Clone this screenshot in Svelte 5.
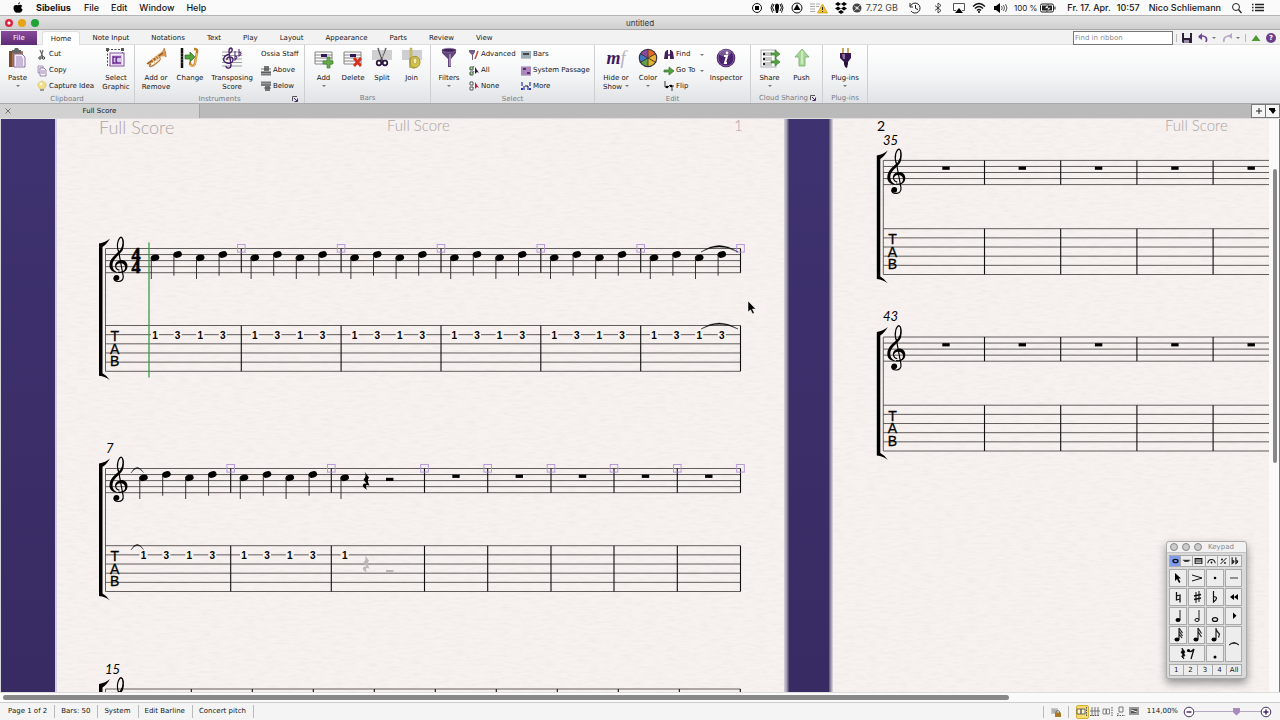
<script>
  const big = {
    paste: '<rect x="1" y="3" width="14" height="16" rx="1" fill="#a8754f"/><rect x="1" y="3" width="3" height="16" fill="#7a4d33"/><path d="M4 2h2l1-2h3l1 2h2v3H4z" fill="#666"/><path d="M6 6h8l3 3v10H6z" fill="#f3ecfa" stroke="#75558e" stroke-width=".8"/><path d="M8 9h6M8 11h7M8 13h7M8 15h7M8 17h7" stroke="#9477ae" stroke-width=".9"/>',
    select: '<rect x="1.5" y="1.5" width="15" height="16" fill="none" stroke="#444" stroke-dasharray="2 1.5"/><path d="M0 0h3v3H0zM15 0h3v3h-3z" fill="#555"/><rect x="4" y="5" width="14" height="13" fill="#f5edfa" stroke="#7d519b"/><path d="M6 8h10M6 10h10M6 14h10M6 16h10M6 12h10" stroke="#b58ccb" stroke-width=".8"/><path d="M7 8v8M7 9h8M7 15h8M11 9q-2 3 0 6" fill="none" stroke="#6b2c92" stroke-width="1.400"/>',
    trumpet: '<path d="M1 15L14 5c2-1 3-3 4-5l2 9c-2-1-4-1-6 0L3 17z" fill="#d89a54"/><path d="M1 16L17 5" stroke="#8a5326" stroke-width="1.100"/><path d="M5 16c-3 2-1 4 3 1l5-4c2-2 1-4-1-3l-6 4" fill="none" stroke="#b97836" stroke-width="1.500"/><path d="M6 10l3 6M9 8l3 6M11 7l3 5" stroke="#efc78f" stroke-width="1.2"/><path d="M18 0q2 4 2 9" stroke="#b87533" fill="none"/>',
    change: '<path d="M2 0v20" stroke="#111" stroke-width="2.5"/><path d="M2 5v12" stroke="#999" stroke-width=".8" stroke-dasharray="1 2"/><path d="M5 7h5V4l5 5-5 5v-3H5z" fill="#50a33d" stroke="#306c22" stroke-width=".7"/><path d="M14 1q4 0 3 3l-2 11c-1 4-5 4-5-1" fill="none" stroke="#c37d25" stroke-width="2.4"/><path d="M17 5l-2 11q-2 4-5 1" fill="none" stroke="#eec160" stroke-width="1.2"/>',
    transpose: '<path d="M0 4h20M0 7.5h20M0 11h20M0 14.500h20M0 18h20" stroke="#888" stroke-width=".8"/><path d="M5 15c-6-2-3-7 0-8 6-3 6-6 4-7-3 0-2 6-1 10l1 7c0 4-5 4-5 1M5 12c-1-4 6-4 6 0 0 3-4 4-6 3" fill="none" stroke="#4b226b" stroke-width="1.4"/><path d="M13 3v9q4-4 0-4M17 1v7q4-3 0-4" fill="none" stroke="#563379" stroke-width="1.1"/>',
    add: '<path d="M1 4h17v13H1z" fill="#fff"/><path d="M1 4h17M1 7h17M1 10h17M1 13h17M1 16h17M1 4v12M18 4v12" stroke="#777" stroke-width=".9"/><path d="M7 6h6v3H7z" fill="#35175b"/><path d="M13 9h3v4h3v3h-3v4h-3v-4H9v-3h4z" fill="#65ad4b" stroke="#417d31" stroke-width=".7"/>',
    delete: '<path d="M1 4h17v13H1z" fill="#fff"/><path d="M1 4h17M1 7h17M1 10h17M1 13h17M1 16h17M1 4v12M18 4v12" stroke="#777" stroke-width=".9"/><path d="M7 6h6v3H7z" fill="#35175b"/><path d="M11 10l7 8M18 10l-7 8" stroke="#d5301c" stroke-width="2.7"/>',
    split: '<path d="M0 2h20v10H0z" fill="#cfcfd1"/><path d="M6 0l5 14M14 0L8 14" stroke="#555" stroke-width="1.6"/><path d="M7 0l3 9M13 0l-3 9" stroke="#ddd" stroke-width=".7"/><circle cx="7" cy="15" r="2.300" fill="#fff" stroke="#28133e" stroke-width="1.7"/><circle cx="13" cy="15" r="2.300" fill="#fff" stroke="#28133e" stroke-width="1.7"/>',
    join: '<path d="M0 2h20v10H0z" fill="#cfcfd1"/><path d="M8 0h2v10H8z" fill="#d5c767" stroke="#a89b45" stroke-width=".5"/><ellipse cx="13" cy="14" rx="5" ry="5.700" fill="#d4c44c" stroke="#9f9033"/><ellipse cx="13" cy="13" rx="2" ry="3" fill="#f4efb1" stroke="#9f9033" stroke-width=".7"/><path d="M8 10v9l5 1" stroke="#aa9a36" stroke-width="1.500" fill="none"/>',
    filters: '<path d="M3 1h14v4l-5 6v8H9v-8L3 5z" fill="#62447a"/><path d="M10 6h2v12h-2z" fill="#9a86ab"/><ellipse cx="10" cy="2.300" rx="7" ry="2" fill="#40245b" stroke="#8d73a1" stroke-width=".7"/>',
    share: '<rect x="1" y="2" width="15" height="17" fill="#fff" stroke="#888" stroke-width=".7"/><path d="M3 5h9M3 7h9M3 10h9M3 12h9M3 15h9M3 17h9" stroke="#777" stroke-width=".8"/><path d="M4 5v2M4 10v2M4 15v2" stroke="#222" stroke-width="2"/><path d="M11 5h4V2l5 4-5 4V7h-4zM11 13h4v-3l5 4-5 4v-3h-4z" fill="#54a53f" stroke="#32722b" stroke-width=".6"/>',
    push: '<path d="M10 1l7 8h-4v9H7V9H3z" fill="#a9d79a" stroke="#78a96d" stroke-width=".8"/><path d="M10 3v13" stroke="#c9ecbc" stroke-width="2"/>',
    inspector: '<circle cx="10" cy="10" r="9.300" fill="#4a226e"/><circle cx="10" cy="10" r="8" fill="none" stroke="#8360a0"/><ellipse cx="9" cy="5" rx="6" ry="3.500" fill="#a58bb8" opacity=".5"/><path d="M8 8h3l-2 7h2" fill="none" stroke="#fff" stroke-width="2"/><circle cx="11" cy="5" r="1.400" fill="#fff"/>',
    color: '<circle cx="10" cy="10" r="9.300" fill="#3a3048"/><path d="M10 10V2a8 8 0 0 1 7 4z" fill="#e46a28"/><path d="M10 10l7-4a8 8 0 0 1 0 8z" fill="#e7b13a"/><path d="M10 10l7 4a8 8 0 0 1-7 4z" fill="#e0b52c"/><path d="M10 10v8a8 8 0 0 1-7-4z" fill="#5f9f46"/><path d="M10 10l-7 4a8 8 0 0 1 0-8z" fill="#3f78bf"/><path d="M10 10L3 6a8 8 0 0 1 7-4z" fill="#8a4aa0"/><path d="M10 1v18M2 5.500l16 9M2 14.500l16-9" stroke="#333" stroke-width=".8"/>',
    plugins: '<path d="M7 0h2v6H7zM12 0h2v6h-2z" fill="#d4a35b"/><path d="M5 5h11v5l-3 4H9L5 10z" fill="#35164f"/><path d="M7 6h3v5H8z" fill="#8b70a0"/><path d="M9 14h4v2l-1 4-2-1-1-3z" fill="#271137"/>'
  };

  const small = {
    cut: '<path d="M3 0l3 7M6 0L4 7" stroke="#666" stroke-width="1.200"/><circle cx="3" cy="8" r="1.200" fill="none" stroke="#333"/><circle cx="6.500" cy="8" r="1.200" fill="none" stroke="#333"/>',
    copy: '<path d="M1 0h5v7H1z" fill="#e8def2" stroke="#8c7aa3" stroke-width=".7"/><path d="M3 2h4l2 2v6H3z" fill="#f7f2fb" stroke="#75628b" stroke-width=".7"/><path d="M4 5h4M4 7h4" stroke="#9f85b7"/>',
    idea: '<path d="M3 8Q0 5 1 2.500q4-5 8 0Q10 5 7 8z" fill="#f5dc83" stroke="#c9b66c" stroke-width=".5"/><circle cx="4" cy="3" r="1.400" fill="#fffce4"/><path d="M3 8h4v2H3z" fill="#999"/>',
    above: '<path d="M3 0h5v5H3z" fill="#777"/><path d="M0 5h10v4H0z" fill="#999"/><path d="M0 3h10M0 6.500h10M0 9h10" stroke="#444" stroke-width=".7"/>',
    below: '<path d="M0 1h10v4H0z" fill="#999"/><path d="M4 5h5v5H4z" fill="#777"/><path d="M0 1h10M0 4h10M3 7h7" stroke="#444" stroke-width=".7"/>',
    advanced: '<path d="M0 0h6v2L4 5v5H3V5L0 2z" fill="#745d83"/><path d="M9 1L6 9" stroke="#c4503a" stroke-width="1.600"/>',
    all: '<path d="M1 1h3v3H1zM1 6h3v3H1z" fill="#fff" stroke="#555"/><path d="M1 2l1 2 3-4M1 7l1 2 3-4" stroke="#3b9234" fill="none"/><path d="M6 1v7l2-2 2 1z" fill="#321149"/>',
    none: '<path d="M1 1h3v3H1zM1 6h3v3H1z" fill="#fff" stroke="#555"/><path d="M6 1v7l2-2 2 1z" fill="#b6213a"/>',
    bars: '<path d="M0 1h10v7H0z" fill="#b5d3e6"/><path d="M0 2h10M0 4h10M0 6h10M0 8h10" stroke="#777" stroke-width=".8"/><path d="M2 3h6v2H2z" fill="#444"/>',
    passage: '<path d="M0 1h10v8H0z" fill="#c8a2d7"/><path d="M0 1h10M0 3h10M0 5h10M0 7h10M0 9h10" stroke="#805a94" stroke-width=".8"/><path d="M2 3h3M6 7h3" stroke="#35184d" stroke-width="1.500"/>',
    more: '<path d="M1 1v4M9 1v4M3 5v4M7 5v4" stroke="#2631a7" stroke-width="1.200"/><path d="M4 5h3" stroke="#111"/><path d="M0 8h2M8 8h2" stroke="#2336bc" stroke-width="2"/>',
    find: '<path d="M1 2l2-2h1v4h2V0h1l2 2 1 7H6V6H4v3H0z" fill="#43215e"/><path d="M4 4h2v2H4z" fill="#765193"/>',
    goto: '<path d="M0 4h5V1l5 4-5 4V6H0z" fill="#54a440" stroke="#34702b" stroke-width=".7"/>',
    flip: '<path d="M1 0v6M1 6h2M8 10V5M8 5h2M4 6l2-2" stroke="#333"/><circle cx="3" cy="6" r="1.300"/><circle cx="7" cy="5" r="1.300"/>'
  };

  const tabs = ['Note Input', 'Notations', 'Text', 'Play', 'Layout', 'Appearance', 'Parts', 'Review', 'View'];

  const groups = [
    { name: 'Clipboard', width: 135, items: [
      { icon: 'paste', lines: ['Paste'], caret: true, width: 35 },
      { width: 60, rows: [['cut', 'Cut'], ['copy', 'Copy'], ['idea', 'Capture Idea']] },
      { icon: 'select', lines: ['Select', 'Graphic'], width: 36 }] },
    { name: 'Instruments', width: 170, launcher: true, items: [
      { icon: 'trumpet', lines: ['Add or', 'Remove'], width: 38 },
      { icon: 'change', lines: ['Change'], width: 30 },
      { icon: 'transpose', lines: ['Transposing', 'Score'], width: 54 },
      { width: 40, rows: [['', 'Ossia Staff'], ['above', 'Above'], ['below', 'Below']] }] },
    { name: 'Bars', width: 126, items: [
      { icon: 'add', lines: ['Add'], caret: true, width: 30 },
      { icon: 'delete', lines: ['Delete'], width: 29 },
      { icon: 'split', lines: ['Split'], width: 29 },
      { icon: 'join', lines: ['Join'], width: 30 }] },
    { name: 'Select', width: 164, items: [
      { icon: 'filters', lines: ['Filters'], caret: true, width: 36 },
      { width: 49, rows: [['advanced', 'Advanced'], ['all', 'All'], ['none', 'None']] },
      { width: 72, rows: [['bars', 'Bars'], ['passage', 'System Passage'], ['more', 'More']] }] },
    { name: 'Edit', width: 156, items: [
      { icon: 'mf', lines: ['Hide or', 'Show ▾'], width: 36 },
      { icon: 'color', lines: ['Color'], caret: true, width: 28 },
      { width: 40, rows: [['find', 'Find', 1], ['goto', 'Go To', 1], ['flip', 'Flip']] },
      { icon: 'inspector', lines: ['Inspector'], width: 42 }] },
    { name: 'Cloud Sharing', width: 72, launcher: true, compact: true, items: [
      { icon: 'share', lines: ['Share'], caret: true, width: 36 },
      { icon: 'push', lines: ['Push'], width: 28 }] },
    { name: 'Plug-ins', width: 45, items: [
      { icon: 'plugins', lines: ['Plug-ins'], caret: true, width: 42 }] }
  ];

  const trayIcons = [
    [20, 'Record', '<circle cx="6" cy="6" r="4.500" fill="none" stroke="#111"/><path d="M4 4h4v4H4z"/>'],
    [20, 'Podcast', '<path d="M3 9Q0 6 3 2M9 9q3-3 0-7M1.500 10.500q-3-5 0-9M10.500 10.500q3-5 0-9" fill="none" stroke="#111"/><path d="M4 3q2-3 4 0v3L7 11H5L4 6z"/>'],
    [20, 'Updates', '<circle cx="6" cy="6" r="5" fill="none" stroke="#111"/><path d="M6 2l3.500 6h-7z"/>'],
    [25, 'Warning', '<path d="M-3 2h5M-3 4.500h5M-3 7h5M-3 9.500h5M3 2h4M3 4.500h3" stroke="#aaa"/><path d="M9.500 2l5 9h-10z" fill="#f1c232" stroke="#c99715" stroke-width=".7"/><path d="M9.500 5v3M9.500 9v1" stroke="#222"/>'],
    [18, 'Dropbox', '<path d="M3 0l3 2-3 2-3-2zM9 0l3 2-3 2-3-2zM3 4.500l3 2-3 2-3-2zM9 4.500l3 2-3 2-3-2zM6 8l3 2-3 2-3-2z"/>'],
    [14, 'Disk', '<circle cx="6" cy="6" r="4.500" fill="#444"/><path d="M3 4l6 4M9 3L3 9" stroke="#aaa"/><circle cx="6" cy="6" r="1.500" fill="#ddd"/>']
  ];
  const trayIcons2 = [
    [23, 'Time Machine', '<path d="M1.500 4A5 5 0 1 1 2 9M1 1v4h3M6.500 3v3.500l2.500 1" fill="none" stroke="#222"/>'],
    [22, 'Bluetooth', '<path d="M3 3.500l6 5-3 2.500V1l3 2.500-6 5" fill="none" stroke="#333" stroke-width=".9"/>'],
    [20, 'AirPlay', '<path d="M3 8.500H.500v-7h11v7H9" fill="none" stroke="#555"/><path d="M6 6l4 5H2z"/>'],
    [21, 'Wi-Fi', '<path d="M0 4.500q6-6 12 0M2 6.500q4-4 8 0M4 8.500q2-2 4 0" fill="none" stroke="#111" stroke-width="1.300"/><circle cx="6" cy="10" r="1"/>'],
    [20, 'Volume', '<path d="M0 4h2l4-3v10L2 8H0z"/><path d="M7.500 4q1.500 2 0 4M9.500 3q2 3 0 6M11.500 2q3 4 0 8" fill="none" stroke="#333" stroke-width=".8"/>']
  ];

  const range = (n) => Array.from({ length: n }, (_, i) => i);

  // Each system: staff origin, tab staff top, right edge, barlines, notes and rests
  const systems = [
    { x: 105.5, y: 248.5, tab: 325.5, end: 740.5, bars: [241.3, 341.1, 441, 540.8, 640.7, 740.5], marks: true, time: true,
      notes: range(24).map((i) => ({ x: 155 + 99.8 * Math.floor(i / 4) + 22.6 * (i % 4), d: i % 2 })), rests: [] },
    { x: 105.5, y: 468.5, tab: 545.7, end: 740.5, bars: [230.7, 331.3, 424.5, 487.7, 551, 614, 677.3, 740.5], marks: true, label: '7', lx: 106, ly: 453,
      notes: [143.5, 166.4, 189.4, 212.3, 244, 267, 289.8, 312.8, 344.7].map((x, i) => ({ x, d: i % 2 })),
      rests: [456, 519.3, 582.5, 645.5, 708.8] },
    { x: 105.5, y: 689, tab: 766, end: 740.5, bars: range(10).map((i) => 191.3 + i * 61), label: '15', lx: 105, ly: 674, notes: [], rests: [] },
    { x: 883.3, y: 160.4, tab: 228.7, end: 1518, bars: range(8).map((i) => 984.5 + i * 76.2), label: '35', lx: 883, ly: 145, notes: [], rests: range(8).map((i) => 946 + i * 76.3) },
    { x: 883.3, y: 337, tab: 405.2, end: 1518, bars: range(8).map((i) => 984.5 + i * 76.2), label: '43', lx: 883, ly: 321, notes: [], rests: range(8).map((i) => 946 + i * 76.3) }
  ];

  const quarterRest = 'M-2 -9.500L2.500 -3.500Q0 -.5 3 4.500Q-1 3 -.5 5.500Q-.5 7.500 .8 9Q-5.500 5.500 -3 3Q-2 2 0 2.800L-3 -1.500Q.5 -5 -2 -9.500Z';

  const padTop = [
    ['Common notes', '<ellipse cx="6" cy="5" rx="3.300" ry="2.200" fill="none" stroke="#111" stroke-width="1.800"/>'],
    ['More notes', '<path d="M1 4h10" stroke="#111"/><path d="M3 5h6" stroke="#111" stroke-width="2"/>'],
    ['Beams', '<path d="M1.500 1v8M10.500 1v8M1.500 5h9M1.500 8h9" fill="none" stroke="#111" stroke-width="1.300"/><path d="M1.500 2h9" stroke="#111" stroke-width="2"/>'],
    ['Articulations', '<path d="M1 8q1-5 5-5t5 5" fill="none" stroke="#111" stroke-width="1.400"/><circle cx="6" cy="7" r="1.200"/>'],
    ['Jazz', '<path d="M10 1L2 9" stroke="#111" stroke-width="1.300"/><circle cx="4" cy="3" r="1.200"/><circle cx="8" cy="7.500" r="1.200"/>'],
    ['Accidentals', '<path d="M1.500 0v8.500q5-4 0-4M6.500 0v8.500q5-4 0-4" fill="none" stroke="#111" stroke-width="1.400"/>']
  ];
  const padKeys = [
    ['Pointer', '<path d="M5 3v8l2-2 2 4 1.500-1-2-3.500H11z"/>'],
    ['Accent', '<path d="M3 5l10 3-10 3" fill="none" stroke="#111"/>'],
    ['Staccato', '<circle cx="8" cy="8" r="1.300"/>'],
    ['Tenuto', '<path d="M4 8h8" stroke="#333"/>'],
    ['Natural', '<path d="M6.500 3v8l3.500-1M10 13.500V6l-3.500 1" fill="none" stroke="#111" stroke-width="1.300"/>'],
    ['Sharp', '<path d="M7 3v11M10 2v11" stroke="#111"/><path d="M5 7l7-1.500M5 10.500L12 9" stroke="#111" stroke-width="1.700"/>'],
    ['Flat', '<path d="M6.500 2v11q6-5 0-5.500" fill="none" stroke="#111" stroke-width="1.200"/>'],
    ['Rewind', '<path d="M8 5v6L4 8zM12 5v6L8 8z"/>'],
    ['Quarter note', '<path d="M10 2v10" stroke="#222"/><ellipse cx="8" cy="12" rx="2.500" ry="1.900"/>'],
    ['Half note', '<path d="M10 2v10" stroke="#222"/><ellipse cx="8" cy="12" rx="2.100" ry="1.500" fill="none" stroke="#111"/>'],
    ['Whole note', '<ellipse cx="8" cy="11.500" rx="2.600" ry="1.900" fill="none" stroke="#111" stroke-width="1.300"/>'],
    ['Play', '<path d="M7 4.500v6.500l3.500-3.200z"/>'],
    ['Thirty-second note', '<path d="M9 1v11M9 1l3.500 5M9 4l3.500 5M9 7l3 4" stroke="#222" stroke-width="1.200"/><ellipse cx="7" cy="12.500" rx="2.500" ry="1.900"/>'],
    ['Sixteenth note', '<path d="M9 1v11M9 1l3.500 5.500M9 4.500l3.500 5.500" stroke="#222" stroke-width="1.200"/><ellipse cx="7" cy="12.500" rx="2.500" ry="1.900"/>'],
    ['Eighth note', '<path d="M9 1v11M9 2q1 3 3.500 5l-1 3.500" fill="none" stroke="#222" stroke-width="1.200"/><ellipse cx="7" cy="12.500" rx="2.500" ry="1.900"/>'],
    ['Tie', '<path d="M3 9q5-5 10 0-5-3.500-10 0z" stroke="#111" stroke-width=".7"/>', 'tall'],
    ['Rest', '<path d="M3 2l3 4q-2 1 0 4-3-1-1 3-4-3-1-4L2 6q2-1 1-4z" stroke="#111" stroke-width=".8"/><path d="M9 5q3 2 6-2l-3 10" fill="none" stroke="#111" stroke-width="1.300"/><circle cx="9.500" cy="4.500" r="1.600"/>', 'wide'],
    ['Dot', '<circle cx="8" cy="11" r="1.500"/>']
  ];

  const views = [
    '<path d="M0 3h4v5H0zM4 3h4v5H4z" fill="#fff6d0" stroke="#555" stroke-width=".9"/><path d="M9.500 1v9" stroke="#555" stroke-dasharray="1.500 1"/>',
    '<path d="M2 1v9M5 1v9M8 1v9M0 5h10" stroke="#666" stroke-width=".9"/><path d="M0 9.500h10" stroke="#555" stroke-dasharray="1.500 1"/>',
    '<path d="M0 3h3v5H0zM3.500 3h3v5h-3z" fill="none" stroke="#777" stroke-width=".9"/><path d="M9 1v9" stroke="#555" stroke-dasharray="1.500 1"/>',
    '<path d="M3 1h4v5H3z" fill="none" stroke="#777"/><path d="M1 9.500h8M2 7v2" stroke="#555" stroke-dasharray="1.500 1"/>',
    '<path d="M0 1h10v8H0z" fill="#999"/><path d="M2 3h6v4H2z" fill="#555"/><path d="M2 4l6 2" stroke="#eee"/>'
  ];
</script>

{#snippet glyph(size, body, cls = '')}
  <svg class={cls} width={size} height={size} viewBox="0 0 {size} {size}" aria-hidden="true">{@html body}</svg>
{/snippet}

{#snippet clef(x, y)}
  <g transform="translate({x} {y}) scale(0.3333) translate(-166 -86)">
    <path d="M206 98C196 74 206 54 213 52C222 56 221 78 212 90M205 93L219 168C221 180 212 186 204 185C195 185 191 180 191 174M204 157C224 160 229 148 229 139M197 139C197 146 202 150 208 151" fill="none" stroke="#000" stroke-width="3.500" />
    <circle cx="199" cy="174" r="8.500" />
    <path d="M214 86C200 103 178 113 178 137C178 152 192 160 206 159C192 154 187 146 187 136C187 118 206 108 217 92C223 80 222 62 214 50C219 64 219 78 214 86Z" />
    <path d="M232 139C232 127 222 119 211 121C198 123 192 134 196 143C199 134 203 130 211 130C220 130 225 135 225 143C225 150 220 156 213 158C225 157 232 149 232 139Z" />
  </g>
{/snippet}

<div class="app">
  <nav class="menubar" aria-label="System menu">
    <svg class="apple" width="10" height="11" viewBox="0 0 10 11" aria-hidden="true"><path d="M7 0q0 2-2 2.500Q5 .5 7 0zM5 3.200Q8 2 9.300 4q-2.300 1.500.4 3.700Q8 12 5 10.400 2.500 12 .8 8 -.6 1.800 5 3.200z" /></svg>
    <a href="#app" class="appname">Sibelius</a>
    {#each ['File', 'Edit', 'Window', 'Help'] as m}<a href="#{m}">{m}</a>{/each}
    <div class="tray">
      {#each trayIcons as [w, label, body]}
        <span class="cell" style:width="{w}px" title={label}>{@render glyph(12, body)}</span>
      {/each}
      <span class="mem">7.72 GB</span>
      {#each trayIcons2 as [w, label, body]}
        <span class="cell" style:width="{w}px" title={label}>{@render glyph(12, body)}</span>
      {/each}
      <span class="pct">100 %</span>
      <svg class="battery" width="16" height="10" viewBox="0 0 16 10" aria-hidden="true"><rect x=".5" y="1" width="13" height="8" rx="1.500" fill="#fff" stroke="#222" /><path d="M2 2.500h10v5H2z" fill="#222" /><path d="M8 1L4.500 5.500H8L6.500 9 11 4.500H8z" fill="#fff" stroke="#222" stroke-width=".6" /><path d="M15 3.500v3" stroke="#222" /></svg>
      <span class="date">Fr. 17. Apr.</span>
      <span class="time">10:57</span>
      <span class="user">Nico Schliemann</span>
      {@render glyph(12, '<circle cx="5" cy="5" r="3.500" fill="none" stroke="#222"/><path d="M7.500 7.500l3 3.500" stroke="#222" stroke-width="1.300"/>', 'search')}
      {@render glyph(12, '<path d="M3 2.500h9M3 5.500h9M3 8.500h9" stroke="#222" stroke-width="1.300"/><path d="M0 2.500h1.500M0 5.500h1.500M0 8.500h1.500" stroke="#222" stroke-width="1.300"/>', 'list')}
    </div>
  </nav>

  <header class="titlebar">
    <div class="lights"><button class="red" aria-label="Close"></button><button class="amber" aria-label="Minimise"></button><button class="green" aria-label="Zoom"></button></div>
    <span>untitled</span>
  </header>

  <div class="tabs">
    <button class="file">File</button>
    <button class="home">Home</button>
    {#each tabs as t}<button>{t}</button>{/each}
    <div class="quick">
      <input type="text" placeholder="Find in ribbon" aria-label="Find in ribbon" />
      <i class="bar"></i>
      <button aria-label="Save">{@render glyph(10, '<path d="M0 0h10v10H1L0 9z" fill="#2d2038"/><path d="M2 0h6v5H2z" fill="#eee"/><path d="M2 7h5v3H2z" fill="#998cab"/>')}</button>
      <button aria-label="Undo" class="undo">{@render glyph(10, '<path d="M1 3h4q5 1 3 6" fill="none" stroke="#6f4695" stroke-width="1.700"/><path d="M0 4l4-4v7z" fill="#6f4695"/>')}<i class="caret"></i></button>
      <button aria-label="Redo" class="undo">{@render glyph(10, '<path d="M9 3H6Q1 4 2 9" fill="none" stroke="#b7a7c8" stroke-width="1.700"/><path d="M10 0v6L6 3z" fill="#b7a7c8"/>')}<i class="caret"></i></button>
      <i class="bar"></i>
      <button aria-label="Collapse ribbon">{@render glyph(10, '<path d="M5 2l4.500 6h-9z" fill="#4e9a35"/>')}</button>
      <button aria-label="Help" class="help">?</button>
    </div>
  </div>

  <div class="ribbon">
    {#each groups as g}
      <section class="group" class:compact={g.compact} style:width="{g.width}px" aria-label={g.name}>
        <div class="body">
          {#each g.items as it}
            {#if it.rows}
              <div class="stack" style:width="{it.width}px">
                {#each it.rows as [ic, label, caret]}
                  {#if ic}
                    <button class="row">{@render glyph(10, small[ic])}<span>{label}</span>{#if caret}<i class="caret"></i>{/if}</button>
                  {:else}
                    <span class="row">{label}</span>
                  {/if}
                {/each}
              </div>
            {:else}
              <button class="big" style:width="{it.width}px">
                {#if it.icon === 'mf'}
                  <span class="mf"><b>m</b><em>f</em></span>
                {:else}
                  {@render glyph(20, big[it.icon])}
                {/if}
                <span class="lines">
                  {#each it.lines as l}
                    <span>{l.replace(' ▾', '')}{#if l.includes('▾')}<i class="caret inline"></i>{/if}</span>
                  {/each}
                </span>
                {#if it.caret}<i class="caret"></i>{/if}
              </button>
            {/if}
          {/each}
        </div>
        <footer><span>{g.name}</span>{#if g.launcher}{@render glyph(6, '<path d="M.5 5V.5H5" fill="none" stroke="#555"/><path d="M2 2l3 3M5.500 2.500v3h-3" stroke="#4b226b" fill="none"/>', 'launch')}{/if}</footer>
      </section>
    {/each}
  </div>

  <div class="docs">
    <div class="doc"><button aria-label="Close tab">{@render glyph(6, '<path d="M.5 .5l5 5M5.500 .5l-5 5" stroke="#666" stroke-width=".9"/>')}</button><span>Full Score</span></div>
    <button class="sq" aria-label="New tab">{@render glyph(8, '<path d="M4 1v6M1 4h6" stroke="#222"/>')}</button>
    <button class="sq" aria-label="Tab list">{@render glyph(8, '<path d="M0 1h6v2H0z"/><path d="M1 3h6L4 7z"/>')}</button>
  </div>

  <div class="work">
    <main class="canvas">
      <svg class="score" role="img" aria-label="Full score">
        <defs>
          <filter id="grain" x="0" y="0" width="100%" height="100%">
            <feTurbulence type="fractalNoise" baseFrequency="0.09 0.42" numOctaves="3" seed="4" />
            <feColorMatrix values="0 0 0 0 0.76  0 0 0 0 0.68  0 0 0 0 0.66  0.55 0 0 0 -0.21" />
          </filter>
          <linearGradient id="edgeR"><stop offset="0" stop-color="#d5d1dc" /><stop offset=".5" stop-color="#a5a1b3" /><stop offset="1" stop-color="#4a4269" /></linearGradient>
          <linearGradient id="edgeL"><stop offset="0" stop-color="#59536e" /><stop offset=".6" stop-color="#aaa6b8" /><stop offset="1" stop-color="#e3dee3" /></linearGradient>
        </defs>
        <g transform="translate(0 -119)">
          <rect class="paper" x="56" y="100" width="730" height="1100" />
          <rect class="paper" x="831" y="100" width="730" height="1100" />
          <rect x="56" y="119" width="730" height="900" filter="url(#grain)" />
          <rect x="831" y="119" width="730" height="900" filter="url(#grain)" />
          <rect x="55" y="100" width="2" height="1100" fill="#d6d0e4" />
          <rect x="784" y="100" width="5" height="1100" fill="url(#edgeR)" />
          <rect x="829" y="100" width="4" height="1100" fill="url(#edgeL)" />

          <text class="head title" x="99" y="134">Full Score</text>
          <text class="head" x="387" y="131">Full Score</text>
          <text class="head" x="734" y="131">1</text>
          <text class="num page" x="877" y="131">2</text>
          <text class="head" x="1165" y="131">Full Score</text>

          {#each systems as s}
            {@const b = s.tab + 45.8}
            {#each range(5) as i}<line class="staff" x1={s.x} x2={s.end} y1={s.y + i * 6.05} y2={s.y + i * 6.05} />{/each}
            {#each range(6) as i}<line class="staff" x1={s.x} x2={s.end} y1={s.tab + i * 9.16} y2={s.tab + i * 9.16} />{/each}
            <line class="staff" x1={s.x} x2={s.x} y1={s.y} y2={b} />
            <path d="M{s.x - 6.5} {s.y - 5}Q{s.x} {s.y - 6} {s.x + 4.5} {s.y - 10}Q{s.x + 1} {s.y - 4} {s.x - 3} {s.y - 1.500}V{b + 2}Q{s.x + 1} {b + 4} {s.x + 4.5} {b + 9}Q{s.x} {b + 5} {s.x - 6.5} {b + 4.5}Z" />
            {@render clef(s.x, s.y)}
            {#if s.time}
              <text class="sig" x="136" y={s.y + 12}>4</text>
              <text class="sig" x="136" y={s.y + 24}>4</text>
            {/if}
            {#each ['T', 'A', 'B'] as t, i}<text class="tab" x={s.x + 9.2} y={s.tab + 15.5 + i * 12.5}>{t}</text>{/each}
            {#each s.bars as x}
              <line class="barline" x1={x} x2={x} y1={s.y} y2={s.y + 24.3} />
              <line class="barline" x1={x} x2={x} y1={s.tab} y2={b} />
              {#if s.marks}<rect class="mark" x={x - 3.8} y={s.y - 4} width="7.600" height="7.600" />{/if}
            {/each}
            {#each s.rests as x}<rect x={x - 3.7} y={s.y + 6.2} width="7.400" height="3.200" />{/each}
            {#each s.notes as n}
              {@const cy = s.y + (n.d ? 6 : 9.3)}
              <ellipse cx={n.x} {cy} rx="4.400" ry="3.100" transform="rotate(-18 {n.x} {cy})" />
              <line class="stem" x1={n.x - 3.7} x2={n.x - 3.7} y1={cy} y2={cy + 21.2} />
              <rect class="paper" x={n.x - 4} y={s.tab + 5} width="8" height="9" />
              <text class="fret" x={n.x} y={s.tab + 13}>{n.d ? 3 : 1}</text>
            {/each}
            {#if s.label}<text class="num" x={s.lx} y={s.ly}>{s.label}</text>{/if}
          {/each}

          <path d="M701 252Q719 239 738 252Q719 242 701 252Z" class="tie" />
          <path d="M701 329Q719 317 738 329Q719 319.500 701 329Z" class="tie" />
          <path d="M131 473Q137 462.500 143.500 472.500Q137 464 131 473Z" class="tie" />
          <path d="M131 550Q137 539.500 143.500 549.500Q137 541 131 550Z" class="tie" />
          <path d={quarterRest} transform="translate(366.500 481)" />
          <rect x="386" y="477.800" width="7.400" height="3.200" />
          <path d={quarterRest} transform="translate(366.500 564)" fill="#bdb9b8" />
          <rect x="386" y="570" width="7.400" height="2.500" fill="#bdb9b8" />
          <line x1="149" x2="149" y1="242.500" y2="377.500" stroke="#3d9b45" stroke-width="1.300" />
          <path d="M748 301v11l2.500-2.200 2 4 1.800-.9-1.900-3.900h3.300z" stroke="#fff" stroke-width=".5" />
        </g>
      </svg>

      <aside class="keypad" aria-label="Keypad">
        <header><i></i><i></i><i></i><span>Keypad</span></header>
        <div class="modes">
          {#each padTop as [label, body], i}<button class:active={i === 0} aria-label={label}><svg width="9" height="8" viewBox="0 0 12 10" aria-hidden="true">{@html body}</svg></button>{/each}
        </div>
        <div class="keys">
          {#each padKeys as [label, body, cls]}<button class={cls} aria-label={label}>{@render glyph(16, body)}</button>{/each}
        </div>
        <div class="voices">
          {#each ['1', '2', '3', '4', 'All'] as v}<button>{v}</button>{/each}
        </div>
      </aside>
    </main>
    <div class="vscroll"><i></i></div>
  </div>
  <div class="hscroll"><i></i></div>

  <footer class="status">
    {#each ['Page 1 of 2', 'Bars: 50', 'System', 'Edit Barline', 'Concert pitch'] as s}<span class="item">{s}</span>{/each}
    <div class="right">
      <span class="lock">{@render glyph(10, '<path d="M0 1h7v6H0z" fill="#ccc"/><path d="M1 3h5M1 5h4" stroke="#999"/><path d="M5 6V4.500q2-2 3.500 0V6" fill="none" stroke="#666"/><path d="M4 5.500h6V10H4z" fill="#a97825"/>')}</span>
      {#each views as v, i}<button class="view" class:on={i === 0} aria-label="View {i + 1}">{@render glyph(11, v)}</button>{/each}
      <output>114,00%</output>
      <button class="zoom" aria-label="Zoom out">{@render glyph(12, '<circle cx="6" cy="6" r="4.800" fill="#fff" stroke="#4b2c69"/><path d="M3.500 6h5" stroke="#4b2c69" stroke-width="1.500"/>')}</button>
      <input type="range" min="0" max="100" value="65" aria-label="Zoom level" />
      <button class="zoom" aria-label="Zoom in">{@render glyph(12, '<circle cx="6" cy="6" r="4.800" fill="#fff" stroke="#4b2c69"/><path d="M3.500 6h5M6 3.500v5" stroke="#4b2c69" stroke-width="1.500"/>')}</button>
    </div>
  </footer>
</div>

<style>
  :global(body) { margin: 0; }
  .app { display: flex; flex-direction: column; height: 100vh; overflow: hidden; background: #f4f4f4; color: #161616; font: 7px/9px 'DejaVu Sans', sans-serif; }
  button { border: 0; padding: 0; margin: 0; background: none; color: inherit; font: inherit; }
  svg { display: block; flex: none; overflow: visible; }
  a { color: inherit; text-decoration: none; }

  .menubar { display: flex; align-items: center; height: 15px; flex: none; padding-left: 13px; background: #fafafa; font: 500 9px/14px Inter, sans-serif; white-space: nowrap; }
  .menubar a { margin-right: 12px; }
  .apple { margin-right: 13px; }
  .menubar .appname { font-weight: 700; margin-right: 13px; }
  .tray { display: flex; align-items: center; margin-left: auto; }
  .cell { display: flex; justify-content: center; }
  .mem { color: #444; font-weight: 400; margin: 0 6px 0 2px; }
  .pct { font-size: 8px; font-weight: 400; margin: 0 3px 0 4px; }
  .date { margin-left: 11px; }
  .time { margin: 0 9px 0 6px; }
  .tray :global(.search) { margin: 0 9px 0 10px; }
  .tray :global(.list) { margin-right: 16px; }

  .titlebar { display: grid; grid-template-columns: 1fr auto 1fr; align-items: center; height: 13px; flex: none; border-top: 1px solid #b5b5b5; border-bottom: 1px solid #aaa; background: linear-gradient(#e2e2e2, #cfcfcf); font: 8px/12px Inter, sans-serif; color: #333; }
  .lights { display: flex; gap: 5px; padding-left: 5px; }
  .lights button { width: 8px; height: 8px; border-radius: 50%; }
  .red { background: radial-gradient(circle, #fff 1px, #dc2342 2px); }
  .amber { background: #e8a317; }
  .green { background: #1fa336; }

  .tabs { display: flex; align-items: stretch; height: 15px; flex: none; background: #f2f2f2; box-shadow: inset 0 -1px #dcdcdc; }
  .tabs > button { padding: 2px 11px 0; white-space: nowrap; }
  .tabs > .file { padding: 1px 12px 0; margin: 1px 5px 0 1px; background: linear-gradient(#8a4b9b, #5c2a74); color: #fff; }
  .tabs > .home { padding: 1px 8px 0; margin: 1px 1px 0 0; background: #fff; border: 1px solid #ddd; border-bottom: 0; border-radius: 3px 3px 0 0; }
  .quick { display: flex; align-items: center; margin-left: auto; padding-right: 4px; gap: 5px; }
  .quick input { width: 100px; height: 14px; box-sizing: border-box; border: 1px solid #777; padding: 0 1px; background: #fff; font: inherit; margin-right: -2px; }
  .quick input::placeholder { color: #888; opacity: 1; }
  .bar { width: 1px; height: 8px; background: #bbb; }
  .undo { display: flex; align-items: center; gap: 4px; margin-left: 1px; }
  .caret { width: 0; height: 0; border: 2px solid transparent; border-top-color: #777; border-bottom: 0; flex: none; }
  .caret.inline { display: inline-block; margin-left: 3px; vertical-align: 2px; }
  .quick .help { width: 10px; height: 10px; border-radius: 50%; background: #6b3d8b; color: #fff; font-weight: 700; line-height: 10px; }

  .ribbon { display: flex; height: 59px; flex: none; background: linear-gradient(#fff, #f3f4f5 55%, #e1e2e5); border-bottom: 1px solid #aaa; box-sizing: border-box; }
  .group { display: flex; flex-direction: column; flex: none; box-sizing: border-box; border-right: 1px solid #cfcfd2; }
  .group.compact { padding-right: 6px; }
  .body { display: flex; flex: 1; justify-content: center; }
  .big { display: flex; flex-direction: column; align-items: center; flex: none; padding-top: 3px; white-space: nowrap; }
  .lines { display: flex; flex-direction: column; align-items: center; margin: 6px 0 2px; }
  .stack { display: flex; flex-direction: column; flex: none; height: 47px; padding: 2px 0 0 2px; margin-right: 1px; }
  .row { display: flex; align-items: center; flex: 1; gap: 2px; white-space: nowrap; text-align: left; }
  .row .caret { margin-left: auto; }
  .mf { height: 20px; font: italic 700 18px/20px 'Liberation Serif', serif; color: #3d195c; }
  .mf em { font-weight: 400; color: #b5aebd; }
  .group footer { position: relative; height: 10px; line-height: 10px; text-align: center; color: #777d88; white-space: nowrap; }
  .group footer :global(.launch) { position: absolute; right: 6px; top: 2px; }
  .compact footer :global(.launch) { right: 0; }

  .docs { display: flex; height: 15px; flex: none; background: #bababa; border-bottom: 1px solid #ddd; box-sizing: border-box; }
  .doc { display: flex; align-items: center; width: 199px; background: #d1d1d1; border-right: 1px solid #a5a5a5; margin-right: auto; }
  .doc button { padding-left: 5px; }
  .doc span { flex: 1; text-align: center; padding-right: 11px; }
  .sq { display: grid; place-items: center; width: 15px; background: #f5f5f5; border: 1px solid #777; margin-left: -1px; box-sizing: border-box; }

  .work { display: flex; flex: 1; min-height: 0; }
  .canvas { position: relative; flex: 1; overflow: hidden; background: linear-gradient(#3e3270, #382b63); border-left: 1px solid #d5d5dc; }
  .score { position: absolute; top: 0; left: -1px; width: 100%; height: 100%; }
  .paper { fill: #f7f2f0; }
  .staff { stroke: #3c3838; stroke-width: .8; }
  .barline { stroke: #111; stroke-width: 1.1; }
  .stem { stroke: #222; stroke-width: .9; }
  .mark { fill: none; stroke: #b391d8; stroke-width: .9; }
  .tie { stroke: #111; stroke-width: .4; }
  .head { font: 300 15px Lato, sans-serif; fill: #aaa5a4; }
  .head.title { font-size: 18px; }
  .num { font: italic 400 13px Lato, sans-serif; }
  .num.page { font-style: normal; font-size: 14px; }
  .sig { font: 700 18px 'Liberation Serif', serif; text-anchor: middle; stroke: #000; stroke-width: .6; }
  .tab { font: 14px 'Liberation Sans', sans-serif; text-anchor: middle; stroke: #000; stroke-width: .3; }
  .fret { font: 700 10px 'Liberation Sans', sans-serif; text-anchor: middle; }

  .keypad { position: absolute; right: 22px; top: 422px; width: 81px; box-sizing: border-box; padding: 0 4px 2px 2px; border: 1px solid #aaa; border-radius: 3px; background: #d9d9d9; box-shadow: 0 4px 9px #0006; }
  .keypad header { display: flex; align-items: center; gap: 4px; height: 11px; box-sizing: border-box; padding-left: 3px; margin: 0 -4px 2px -2px; background: #f2f2f2; border-bottom: 1px solid #c5c5c5; color: #888; border-radius: 3px 3px 0 0; }
  .keypad header i { width: 6px; height: 6px; border: 1px solid #888; border-radius: 50%; background: #ccc; }
  .keypad header span { margin-left: 2px; }
  .keypad button { display: grid; place-items: center; min-width: 0; background: #ededed; border: 1px solid #aaa; box-sizing: border-box; overflow: hidden; }
  .modes { display: grid; grid-template-columns: repeat(6, 1fr); height: 12px; margin-bottom: 2px; }
  .keypad .modes button + button { border-left: 0; }
  .keypad .modes .active { background: #7f9df0; }
  .keys { display: grid; grid-template-columns: repeat(4, 1fr); grid-template-rows: repeat(4, 18px) 17px; gap: 1px; margin-bottom: 2px; }
  .keys .tall { grid-row: span 2; }
  .keys .wide { grid-column: span 2; }
  .voices { display: grid; grid-template-columns: repeat(5, 1fr); height: 12px; font-size: 7px; }
  .keypad .voices button + button { border-left: 0; }

  .vscroll { width: 11px; box-sizing: border-box; padding: 50px 2px 0 4px; background: #fafafa; border-right: 1px solid #777; }
  .vscroll i { display: block; height: 294px; border-radius: 3px; background: #888; }
  .hscroll { height: 11px; flex: none; box-sizing: border-box; padding: 2px 271px 3px 3px; background: #fafafa; border-top: 1px solid #ddd; border-bottom: 1px solid #ccc; }
  .hscroll i { display: block; height: 5px; border-radius: 3px; background: #888; }

  .status { display: flex; align-items: center; height: 17px; flex: none; background: #f4f4f4; padding-left: 1px; }
  .item { padding: 2px 7px 2px 6px; border-right: 1px solid #bbb; white-space: nowrap; }
  .item:first-child { padding-left: 7px; }
  .right { display: flex; align-items: center; margin-left: auto; padding-right: 8px; }
  .lock { padding: 1px 7px; border: solid #bbb; border-width: 0 1px; margin-right: 7px; }
  .view { display: grid; place-items: center; width: 13px; height: 14px; padding: 0 1px; box-sizing: border-box; }
  .view.on { background: #f7dc6f; border: 1px solid #d5ae32; border-radius: 2px; padding: 0; }
  output { margin: 0 5px 0 6px; }
  .right input { appearance: none; width: 67px; height: 9px; margin: 0 -1px; background: linear-gradient(#b3aac0, #b3aac0) center / 100% 1px no-repeat; }
  .right input::-webkit-slider-thumb { appearance: none; width: 7px; height: 8px; background: #a98bbb; clip-path: polygon(0 0, 100% 0, 100% 60%, 50% 100%, 0 60%); }
</style>
